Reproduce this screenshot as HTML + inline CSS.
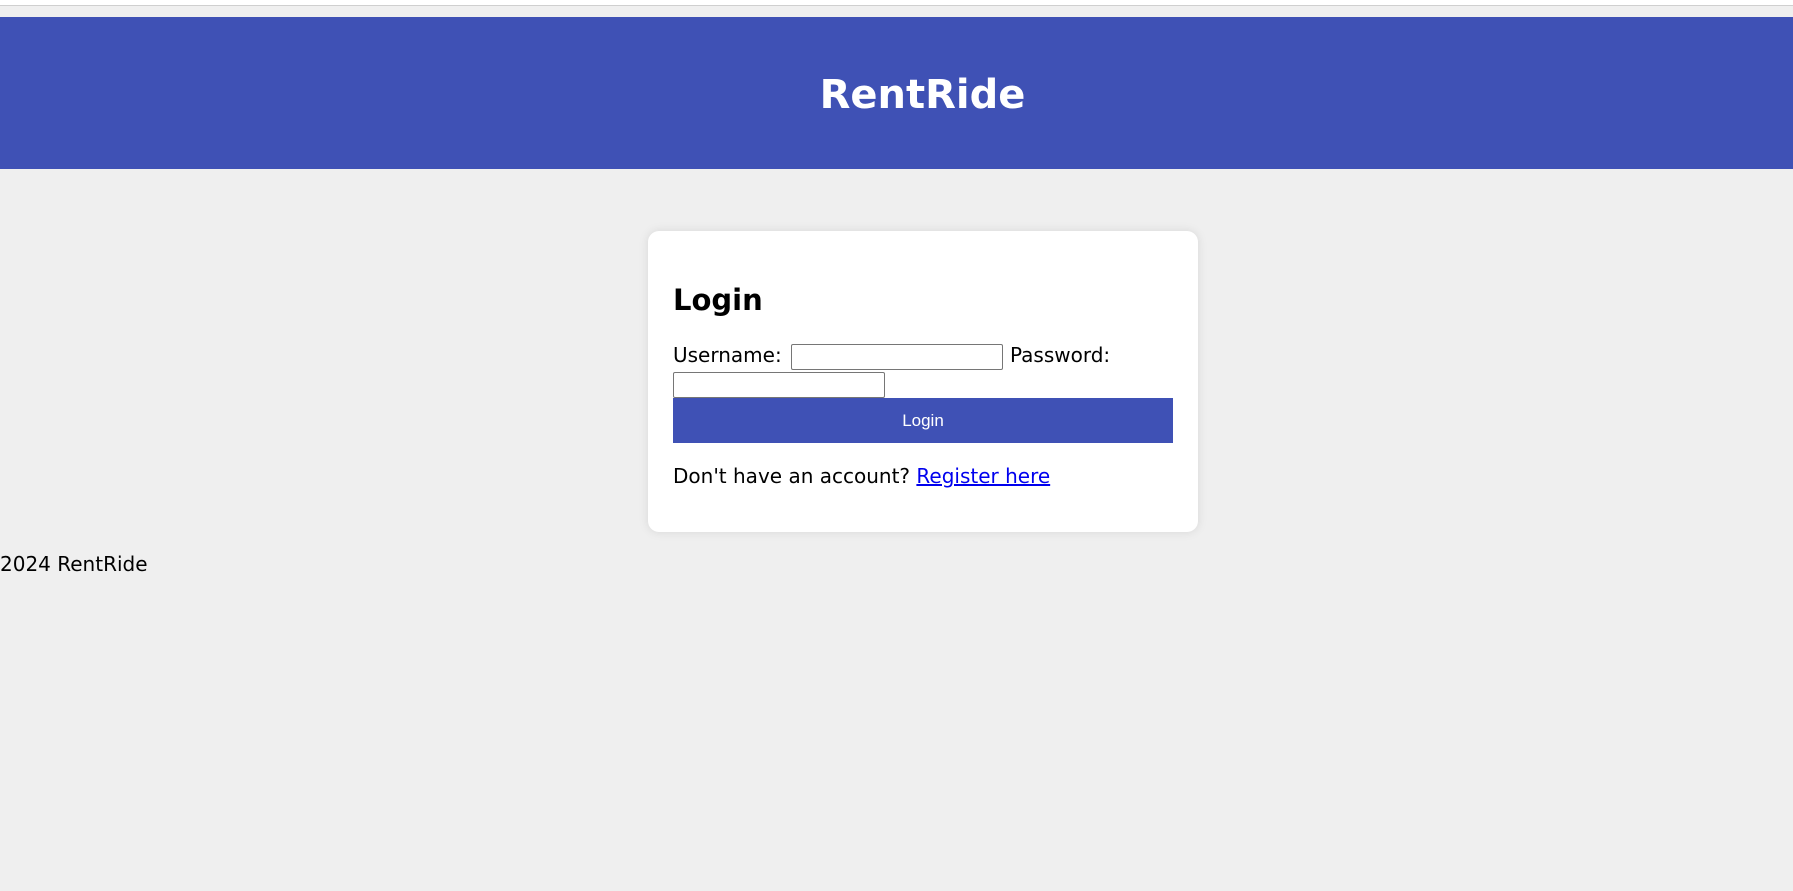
<!DOCTYPE html>
<html><head><meta charset="utf-8"><style>
*{margin:0;padding:0;box-sizing:border-box}
html,body{width:1793px;height:891px;overflow:hidden;background:#efefef;font-family:"DejaVu Sans","Liberation Sans",sans-serif;color:#000}
.top{position:absolute;left:0;top:0;width:1793px;height:6px;background:#fff;border-bottom:1px solid #cfcfcf}
.hdr{position:absolute;left:0;top:17px;width:1793px;height:152px;background:#3f51b5}
.hdr h1{position:absolute;left:26px;width:100%;top:78px;line-height:0;text-align:center;color:#fff;font-size:40px;font-weight:bold}
.card{position:absolute;left:648px;top:231px;width:550px;height:301px;background:#fff;border-radius:11px;box-shadow:0 0 10px rgba(0,0,0,.1)}
.a{position:absolute;white-space:nowrap;line-height:1}
.in{position:absolute;border:1px solid #767676;border-radius:2px;background:#fff}
.btn{position:absolute;left:25px;top:167px;width:500px;height:45px;background:#3f51b5;color:#fff;font-family:"Liberation Sans",sans-serif;font-size:17px;text-align:center;line-height:45px}
a{color:#00e;text-decoration:underline}
</style></head><body>
<div class="top"></div>
<div class="hdr"><h1>RentRide</h1></div>
<div class="card">
<div class="a" style="left:25px;top:55px;font-size:29px;font-weight:bold">Login</div>
<div class="a" style="left:25px;top:114px;font-size:20px">Username:</div>
<div class="in" style="left:143px;top:113px;width:212px;height:26px"></div>
<div class="a" style="left:362px;top:114px;font-size:20px">Password:</div>
<div class="in" style="left:25px;top:141px;width:212px;height:26px"></div>
<div class="btn">Login</div>
<div class="a" style="left:25px;top:235px;font-size:20px">Don't have an account? <a>Register here</a></div>
</div>
<div class="a" style="left:0;top:554px;font-size:20px">2024 RentRide</div>
</body></html>
